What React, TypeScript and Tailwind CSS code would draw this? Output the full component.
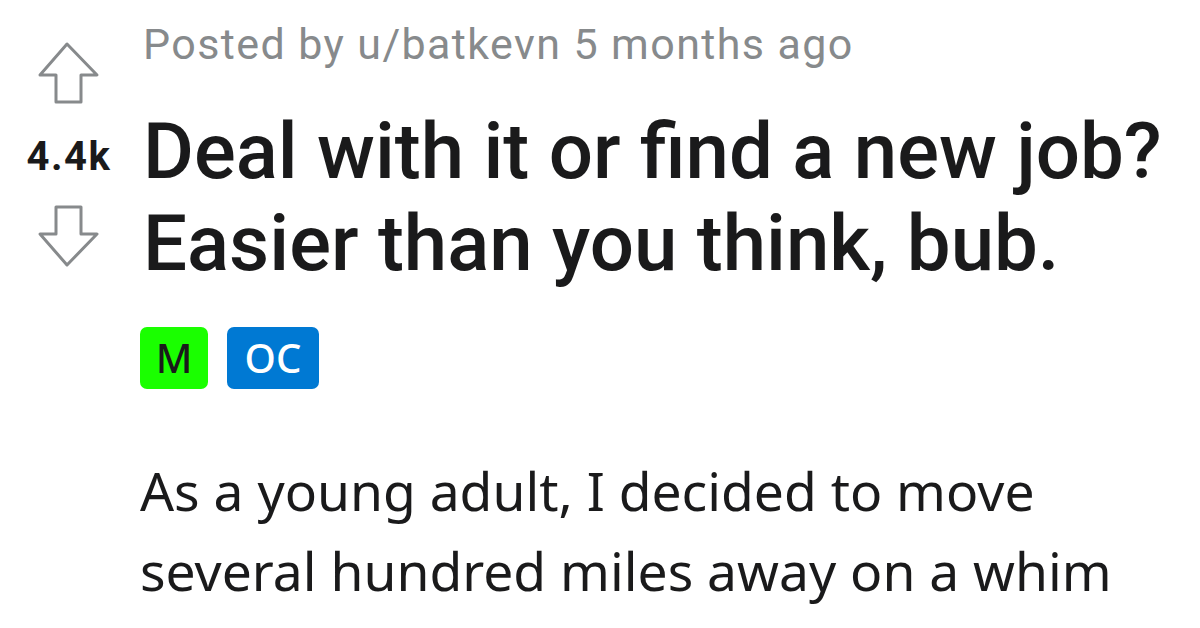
import React from 'react';

const UpArrow = () => (
  <svg width="64" height="66" viewBox="0 0 64 66" fill="none" className="block">
    <path
      d="M30 3 L60 34 L44 34 L44 61 L19 61 L19 34 L3 34 Z"
      stroke="#878a8c"
      strokeWidth="3"
      strokeLinejoin="round"
    />
  </svg>
);

const DownArrow = () => (
  <svg width="64" height="66" viewBox="0 0 64 66" fill="none" className="block">
    <path
      d="M30 63 L60 32 L44 32 L44 5 L19 5 L19 32 L3 32 Z"
      stroke="#878a8c"
      strokeWidth="3"
      strokeLinejoin="round"
    />
  </svg>
);

export default function App() {
  return (
    <div className="h-[628px] w-[1200px] overflow-hidden bg-white">
      <div className="flex flex-row">
        {/* vote column */}
        <div className="flex w-[140px] shrink-0 flex-col items-center pt-[41px]">
          <div className="ml-[-2px]">
            <UpArrow />
          </div>
          <div className="mt-[27px] ml-[-2px] font-['Roboto',sans-serif] text-[40px] font-bold leading-[46px] tracking-[1.5px] text-[#1a1a1b]">
            4.4k
          </div>
          <div className="mt-[22px] ml-[-2px]">
            <DownArrow />
          </div>
        </div>

        {/* post content */}
        <div className="flex min-w-0 flex-col pl-[3px] pt-[18px]">
          <div className="font-['Roboto',sans-serif] text-[43px] leading-[52px] tracking-[1.4px] text-[#878a8c]">
            Posted by u/batkevn 5 months ago
          </div>
          <h1 className="mt-[36px] font-['Roboto',sans-serif] text-[78px] font-medium leading-[92px] text-[#1a1a1b] whitespace-nowrap">
            Deal with it or find a new job?
            <br />
            Easier than you think, bub.
          </h1>
          <div className="mt-[37px] ml-[-3px] flex flex-row gap-[19px]">
            <span className="flex h-[62px] w-[68px] items-center justify-center rounded-[7px] bg-[#1aff00] font-['Noto_Sans',sans-serif] text-[40px] font-medium text-[#1a1a1b]">
              M
            </span>
            <span className="flex h-[62px] w-[92px] items-center justify-center rounded-[7px] bg-[#0079d3] font-['Noto_Sans',sans-serif] text-[40px] font-medium text-white">
              OC
            </span>
          </div>
          <div className="mt-[62px] ml-[-3px] font-['Noto_Sans',sans-serif] text-[53.4px] leading-[80px] text-[#1a1a1b] whitespace-nowrap">
            As a young adult, I decided to move
            <br />
            several hundred miles away on a whim
          </div>
        </div>
      </div>
    </div>
  );
}
